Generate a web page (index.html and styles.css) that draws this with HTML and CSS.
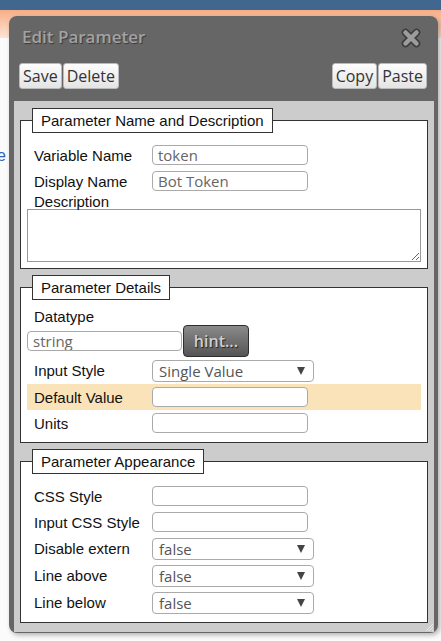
FILE: index.html
```html
<!DOCTYPE html>
<html lang="en">
<head>
  <meta charset="UTF-8">
  <title>Edit Parameter</title>
  <link rel="stylesheet" href="styles.css">
</head>
<body>
  <div class="topbar"></div>
  <div class="band"></div>
  <div class="page">
    <div class="side-nav"><a href="#recipe">Recipe</a></div>
  </div>

  <div class="dialog">
    <div class="dialog-title">
      <span>Edit Parameter</span>
      <svg class="close" width="20" height="20" viewBox="0 0 20 20">
        <path d="M4.5 4.5 L15.5 15.5 M15.5 4.5 L4.5 15.5" stroke="#3c3c3c" stroke-width="7.5" stroke-linecap="round"/>
        <path d="M4.5 4.5 L15.5 15.5 M15.5 4.5 L4.5 15.5" stroke="#9c9c9c" stroke-width="4.5" stroke-linecap="round"/>
      </svg>
    </div>

    <div class="toolbar">
      <div class="btn-group">
        <button class="btn">Save</button>
        <button class="btn">Delete</button>
      </div>
      <div class="btn-group">
        <button class="btn">Copy</button>
        <button class="btn">Paste</button>
      </div>
    </div>

    <div class="panel">
      <fieldset>
        <legend>Parameter Name and Description</legend>
        <div class="row">
          <label>Variable Name</label>
          <input type="text" value="token">
        </div>
        <div class="row">
          <label>Display Name</label>
          <input type="text" value="Bot Token">
        </div>
        <div class="label-line">Description</div>
        <textarea></textarea>
      </fieldset>

      <fieldset>
        <legend>Parameter Details</legend>
        <div class="label-line datatype">Datatype</div>
        <div class="hint-row">
          <input type="text" class="datatype-input" value="string">
          <button class="hint">hint...</button>
        </div>
        <div class="row select-row">
          <label>Input Style</label>
          <span class="select"><select><option>Single Value</option></select></span>
        </div>
        <div class="row highlight">
          <label>Default Value</label>
          <input type="text">
        </div>
        <div class="row">
          <label>Units</label>
          <input type="text">
        </div>
      </fieldset>

      <fieldset>
        <legend>Parameter Appearance</legend>
        <div class="row">
          <label>CSS Style</label>
          <input type="text">
        </div>
        <div class="row">
          <label>Input CSS Style</label>
          <input type="text">
        </div>
        <div class="row select-row">
          <label>Disable extern</label>
          <span class="select"><select><option>false</option></select></span>
        </div>
        <div class="row select-row">
          <label>Line above</label>
          <span class="select"><select><option>false</option></select></span>
        </div>
        <div class="row select-row">
          <label>Line below</label>
          <span class="select"><select><option>false</option></select></span>
        </div>
      </fieldset>
    </div>

    <svg class="grip" width="10" height="10" viewBox="0 0 10 10">
      <path d="M9 2 L2 9 M9 5 L5 9 M9 8 L8 9" stroke="#e8e8e8" stroke-width="1"/>
    </svg>
  </div>
</body>
</html>
```

FILE: styles.css
```css
body {
  margin: 0;
  background-color: #fbfbfb;
  font-family: 'Liberation Sans', Arial, sans-serif;
}
.topbar {
  height: 10px;
  background-color: #41678f;
}
.band {
  height: 28px;
  background: linear-gradient(to bottom, #f7ae86, #fde4d6);
}
.page {
  display: flex;
  padding-top: 109px;
}
.side-nav {
  width: 6px;
  overflow: hidden;
  direction: rtl;
  white-space: nowrap;
  font-size: 16px;
}
.side-nav a {
  color: #2a62b8;
  text-decoration: none;
}

.dialog {
  position: absolute;
  top: 16px;
  left: 9px;
  width: 429px;
  height: 617px;
  background-color: #666;
  border-radius: 8px;
  box-shadow: 2px 2px 5px rgba(0,0,0,0.3);
  display: flex;
  flex-direction: column;
}
.dialog-title {
  flex-shrink: 0;
  height: 40px;
  padding: 0 17px 0 13px;
  display: flex;
  align-items: center;
  justify-content: space-between;
  font-family: 'Open Sans', sans-serif;
  font-size: 17px;
  font-weight: 600;
  color: #a2a2a2;
  text-shadow: 1px 1px 1px #3a3a3a;
}
.close {
  margin-top: 4px;
}
.toolbar {
  flex-shrink: 0;
  margin-top: 7px;
  height: 26px;
  padding: 0 11px 0 10px;
  display: flex;
  justify-content: space-between;
}
.btn-group {
  display: flex;
  gap: 1px;
}
.btn {
  height: 26px;
  padding: 0 3px;
  font-family: 'Open Sans', sans-serif;
  font-size: 16px;
  color: #333;
  background: linear-gradient(to bottom, #fdfdfd, #e4e4e4);
  border: 1px solid #bbb;
  border-radius: 3px;
  cursor: pointer;
}
.panel {
  flex: 1;
  min-height: 0;
  margin: 12px 4px 1px 5px;
  padding: 7px 6px;
  background-color: #ccc;
}
fieldset {
  margin: 0 0 6px;
  padding: 9px 6px 6px;
  border: 1px solid #333;
  background-color: white;
  min-width: 0;
}
fieldset:last-child {
  margin-bottom: 0;
}
legend {
  margin-left: 5px;
  padding: 0 8px;
  border: 1px solid #333;
  background-color: white;
  font-size: 15px;
  line-height: 23px;
  color: #111;
}
.row {
  display: flex;
  align-items: center;
  height: 26px;
}
.row.select-row {
  height: 27px;
}
.row.highlight {
  background-color: #fae3b9;
}
.row label, .label-line {
  font-size: 15px;
  color: #111;
}
.row label {
  width: 118px;
  padding-left: 7px;
  flex-shrink: 0;
}
.label-line {
  padding-left: 7px;
  line-height: 15px;
}
.label-line.datatype {
  line-height: 16px;
}
input[type="text"] {
  width: 156px;
  height: 20px;
  box-sizing: border-box;
  margin: 0;
  padding: 0 5px;
  border: 1px solid #aaa;
  border-radius: 4px;
  font-family: 'Open Sans', sans-serif;
  font-size: 15px;
  color: #666;
  background-color: white;
}
textarea {
  display: block;
  width: 100%;
  height: 53px;
  box-sizing: border-box;
  margin: 0;
  border: 1px solid #999;
}
.hint-row {
  display: flex;
  align-items: center;
  height: 32px;
}
.datatype-input.datatype-input {
  width: 155px;
}
.hint {
  width: 66px;
  height: 32px;
  margin-left: 1px;
  font-family: 'Open Sans', sans-serif;
  font-size: 16px;
  font-weight: 600;
  color: #cfcfcf;
  text-shadow: 1px 1px 1px #222;
  background: linear-gradient(to bottom, #8a8a8a, #555);
  border: 1px solid #2e2e2e;
  border-radius: 4px;
}
.select {
  position: relative;
  display: block;
  width: 162px;
  height: 22px;
}
.select select {
  appearance: none;
  width: 100%;
  height: 100%;
  margin: 0;
  padding: 0 6px;
  border: 1px solid #aaa;
  border-radius: 4px;
  background-color: white;
  font-family: 'Open Sans', sans-serif;
  font-size: 15px;
  color: #555;
}
.select::after {
  content: "";
  position: absolute;
  right: 9px;
  top: 7px;
  border-left: 4px solid transparent;
  border-right: 4px solid transparent;
  border-top: 8px solid #444;
  pointer-events: none;
}
.grip {
  position: absolute;
  right: 4px;
  bottom: 1px;
}
```
